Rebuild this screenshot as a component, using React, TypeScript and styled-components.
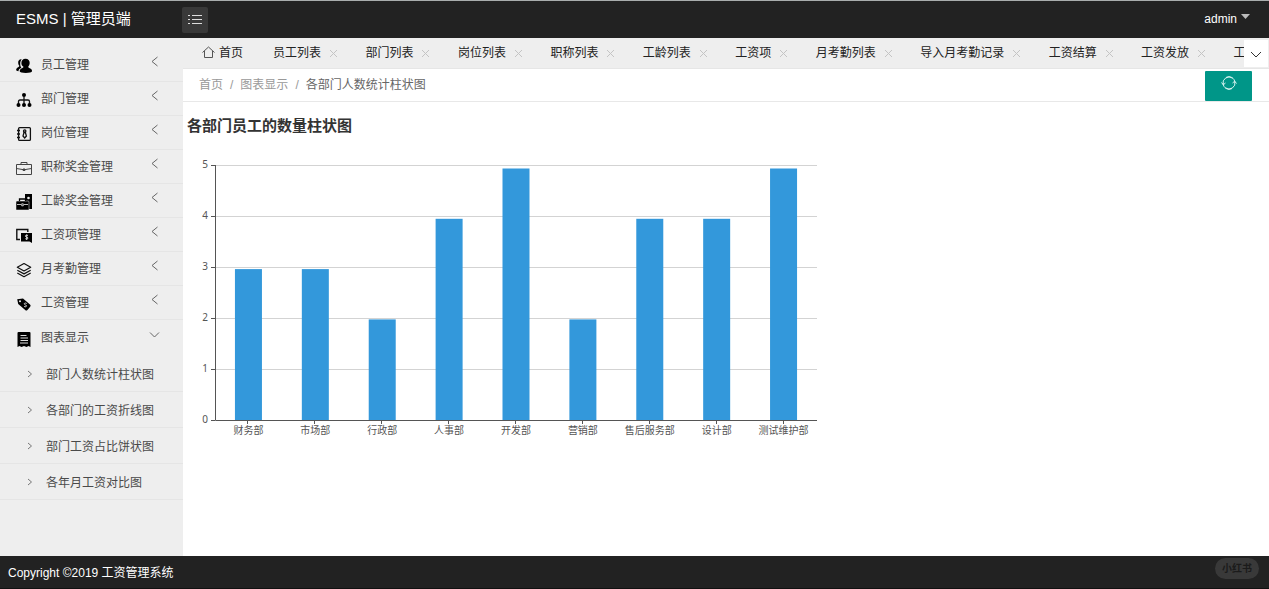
import React from "react";
import styled, { createGlobalStyle } from "styled-components";

const GlobalStyle = createGlobalStyle`
  * { box-sizing: border-box; }
  body {
    margin: 0;
    font-family: "Liberation Sans", "Noto Sans CJK SC", sans-serif;
    font-size: 12px;
    color: #333;
    background: #fff;
  }
  a { color: inherit; text-decoration: none; }
  button { font: inherit; color: inherit; border: 0; padding: 0; background: none; cursor: pointer; }
  ul, ol { list-style: none; margin: 0; padding: 0; }
  svg { display: block; flex: none; }
`;

const Page = styled.div`
  display: flex;
  flex-direction: column;
  min-height: 100vh;
`;

const Header = styled.header`
  display: flex;
  align-items: center;
  height: 38px;
  background: #222;
  border-top: 1px solid #a9adad;
  color: #fff;
`;

const Brand = styled.h1`
  width: 182px;
  margin: 0;
  padding: 0 0 2px 16px;
  font-size: 15px;
  line-height: 20px;
  font-weight: 400;
`;

const MenuToggle = styled.button`
  display: flex;
  align-items: center;
  justify-content: center;
  width: 26px;
  height: 26px;
  border-radius: 2px;
  background: #393939;
`;

const UserMenu = styled.button`
  display: flex;
  align-items: center;
  gap: 4px;
  margin-left: auto;
  margin-right: 18px;
  padding-bottom: 2px;
  line-height: 20px;

  svg { margin-bottom: 4px; }
`;

const Body = styled.div`
  display: flex;
  flex: 1;
`;

const Sidebar = styled.nav`
  width: 183px;
  flex: none;
  padding-top: 10px;
  background: #eee;
  color: #4a4a4a;
`;

const MenuLink = styled.a<{ $open?: boolean }>`
  display: flex;
  align-items: center;
  height: ${(p) => (p.$open ? 36 : 34)}px;
  padding: 0 22px 0 16px;
  border-bottom: 1px solid ${(p) => (p.$open ? "transparent" : "#e5e5e5")};

  span { flex: 1; margin-left: 9px; line-height: 18px; }
  > svg:last-child { margin-bottom: 5px; }
  > svg:first-child { margin-top: 2px; }
`;

const SubLink = styled.a`
  display: flex;
  align-items: center;
  gap: 12px;
  height: 36px;
  padding-left: 26px;
  border-bottom: 1px solid #e5e5e5;
`;

const Main = styled.main`
  display: flex;
  flex-direction: column;
  flex: 1;
  min-width: 0;
`;

const TabBar = styled.div`
  display: flex;
  align-items: center;
  height: 31px;
  background: #eee;
  border-bottom: 1px solid #e6e6e6;
`;

const TabViewport = styled.div`
  flex: 1;
  min-width: 0;
  overflow: hidden;
`;

const TabList = styled.ul`
  display: flex;
  width: calc(100% + 69px);
  padding-left: 19px;
`;

const Tab = styled.li`
  display: flex;
  align-items: center;
  flex: 1 0 auto;
  padding-right: 14px;
  margin-left: 13px;
  line-height: 30px;
  white-space: nowrap;
  color: #222;

  &:first-child { flex: none; margin-left: 0; padding-right: 17px; }
`;

const TabLink = styled.a`
  display: flex;
  align-items: center;
  gap: 4px;
`;

const TabClose = styled.button`
  display: flex;
  margin-left: 8px;
`;

const TabMore = styled.button`
  display: flex;
  align-items: center;
  justify-content: center;
  width: 24px;
  height: 27px;
  margin-right: 1px;
  padding-top: 4px;
  background: #fff;
`;

const CrumbBar = styled.div`
  display: flex;
  align-items: flex-end;
  justify-content: space-between;
  height: 33px;
  padding: 0 17px 0 16px;
  border-bottom: 1px solid #e8e8e8;
`;

const Crumbs = styled.ol`
  display: flex;
  line-height: 32px;
  color: #999;

  li + li::before { content: "/"; margin: 0 7px; }
  li:last-child a { color: #666; }
`;

const Refresh = styled.button`
  display: flex;
  align-items: center;
  justify-content: center;
  width: 47px;
  height: 30px;
  padding-bottom: 6px;
  border-radius: 1px;
  background: #009688;
`;

const Content = styled.section`
  padding: 14px 4px;
`;

const ChartTitle = styled.h2`
  margin: 0 0 24px;
  font-size: 15px;
  line-height: 20px;
  font-weight: 700;
`;

const Chart = styled.svg`
  font-family: "Noto Sans", "Noto Sans CJK SC", sans-serif;
  font-size: 10px;
  fill: #555;
`;

const Footer = styled.footer`
  display: flex;
  justify-content: space-between;
  height: 33px;
  padding: 2px 10px 0 8px;
  background: #222;
  border-bottom: 1px solid #111;
  color: #fff;
  line-height: 30px;
`;

const Watermark = styled.span`
  height: 21px;
  padding: 0 7px;
  border-radius: 11px;
  background: #393939;
  color: #1b1b1b;
  font-size: 10px;
  font-weight: 700;
  line-height: 21px;
`;

const Icon = ({ children }: { children: React.ReactNode }) => (
  <svg width="16" height="16" viewBox="0 0 16 16" fill="none" stroke="#111" aria-hidden="true">
    {children}
  </svg>
);

const Chevron = ({ d, w, h, color = "#666" }: { d: string; w: number; h: number; color?: string }) => (
  <svg width={w} height={h} fill="none" stroke={color} aria-hidden="true">
    <path d={d} />
  </svg>
);

const menu: { label: string; icon: React.ReactNode }[] = [
  {
    label: "员工管理",
    icon: (
      <g stroke="none" fill="#000">
        <path d="M9.5 .8c2.800 0 4.300 1.900 4.200 4.300-.1 1.700-.8 2.900-1.500 3.700 0 .8.6 1 1.600 1.500 1.500.7 2.300 1.500 2.200 3-.1 1.200-2.800 1.700-6.200 1.700s-6-.5-6.100-1.700c0-1.500.8-2.300 2.200-3 1-.5 1.600-.7 1.600-1.500C6 8 5.400 6.800 5.400 5.100 5.300 2.700 6.800 .8 9.500 .8z" />
        <path d="M5.700 1.300C3 1.100 2 3 2.200 5c.1 1.300.6 2.200 1.100 2.800 0 .8-.4 1-1.200 1.400C.9 9.900 0 10.800.2 12c.1.700.9 1 2.200 1.200.3-1.700 1.300-2.600 2.900-3.400-.8-1.300-1.200-2.700-1.100-4.500 0-1.400.6-2.900 1.500-4z" />
      </g>
    ),
  },
  {
    label: "部门管理",
    icon: (
      <g fill="#000">
        <circle cx="8" cy="3" r="2" stroke="none" />
        <path d="M8 4v8M2.500 12V9.500q0-1.500 1.500-1.500h8q1.500 0 1.500 1.500V12" fill="none" strokeWidth="1.300" />
        <g stroke="none">
          <circle cx="2.500" cy="13" r="2" />
          <circle cx="8" cy="13" r="2" />
          <circle cx="13.500" cy="13" r="2" />
        </g>
      </g>
    ),
  },
  {
    label: "岗位管理",
    icon: (
      <g strokeWidth="1.300">
        <rect x="2.600" y="1.600" width="11.800" height="12.800" rx="1" />
        <path d="M1 4.500h3M1 8h3M1 11.500h3" />
        <circle cx="8.700" cy="5" r="1.200" />
        <path d="M8 6.500 7 10l1.700 2 1.700-2-1-3.500z" />
      </g>
    ),
  },
  {
    label: "职称奖金管理",
    icon: (
      <g stroke="#444">
        <path d="M.5 4.500h15v10H.5zM5 4.500v-2h6v2M.5 8.500q7.500 2.500 15 0" />
        <path d="M7 9h2v1.500H7z" fill="#444" />
      </g>
    ),
  },
  {
    label: "工龄奖金管理",
    icon: (
      <g stroke="none">
        <path d="M9 0h7v15H9z" fill="#000" />
        <path d="M0 8q0-1 1-1h11q1 0 1 1v8H0z" fill="#000" stroke="#eee" strokeWidth=".5" />
        <path d="M3.500 7V5h6v2" fill="none" stroke="#000" strokeWidth="1.300" />
        <path d="M1 10.500h4M8 10.500h4M5.700 9.800h1.600v2H5.700z" stroke="#eee" strokeWidth=".8" />
        <circle cx="12.500" cy="4" r="1.300" fill="#eee" />
      </g>
    ),
  },
  {
    label: "工资项管理",
    icon: (
      <g>
        <path d="M4 11.500H.8v-10h11V4" strokeWidth="1.400" />
        <path d="M5 5h11v10l-2.500-1.500H5z" fill="#000" stroke="none" />
        <path d="M12 7.500c-2-.8-3 0-2.500 1s2.500.5 2.500 1.500-1.500 1.300-2.700.7M10.700 6.500v5.500" stroke="#eee" strokeWidth=".9" />
      </g>
    ),
  },
  {
    label: "月考勤管理",
    icon: (
      <g strokeWidth="1.200" strokeLinejoin="round">
        <path d="m8 1.500 6.700 3.700L8 9 1.300 5.200z" />
        <path d="m1.300 8.200 6.700 3.700 6.700-3.700M1.300 11 8 14.700l6.700-3.700" />
      </g>
    ),
  },
  {
    label: "工资管理",
    icon: (
      <g>
        <path d="M1.200 3.200 7 2.500l7 6q1.200 1 .2 2.200l-2.800 3.300q-1 1-2.200 0L2.200 8z" fill="#000" stroke="none" />
        <circle cx="4" cy="5.200" r="1" fill="#eee" stroke="none" />
        <path d="M10.700 7.500c-1.700-1-2.800-.2-2.200.8s2.200.7 2 1.700-1.500 1-2.500.3" stroke="#eee" strokeWidth=".9" />
      </g>
    ),
  },
  {
    label: "图表显示",
    icon: (
      <g stroke="none">
        <path d="M1.500 2q0-1 1-1h11q1 0 1 1v14l-2-1-2 1-2.500-1L5.500 16l-2-1-2 1z" fill="#000" />
        <path d="M4.500 4.500h6M4.500 7h7.500M4.500 9.500h7.500M4 12h8" stroke="#ddd" />
      </g>
    ),
  },
];

const subMenu = ["部门人数统计柱状图", "各部门的工资折线图", "部门工资占比饼状图", "各年月工资对比图"];

const tabs = [
  "员工列表", "部门列表", "岗位列表", "职称列表", "工龄列表", "工资项",
  "月考勤列表", "导入月考勤记录", "工资结算", "工资发放", "工资列表",
];

const data: [string, number][] = [
  ["财务部", 3], ["市场部", 3], ["行政部", 2], ["人事部", 4], ["开发部", 5],
  ["营销部", 2], ["售后服务部", 4], ["设计部", 4], ["测试维护部", 5],
];

const AXIS_X = 28;
const BASE_Y = 260;
const PLOT_W = 602;
const GRID_STEP = 51;
const BAR_STEP = 50.3;
const BAR_W = 27;

function BarChart() {
  const slot = PLOT_W / data.length;
  return (
    <Chart width="640" height="290" role="img" aria-label="各部门员工的数量柱状图">
      {[0, 1, 2, 3, 4, 5].map((n) => {
        const y = BASE_Y - n * GRID_STEP + 0.5;
        return (
          <g key={n}>
            {n > 0 && <path d={`M${AXIS_X} ${y}H${AXIS_X + PLOT_W}`} stroke="#d3d3d3" />}
            <path d={`M${AXIS_X - 4} ${y}H${AXIS_X}`} stroke="#555" />
            <text x={AXIS_X - 7} y={y + 2} textAnchor="end">{n}</text>
          </g>
        );
      })}
      {data.map(([name, value], i) => {
        const cx = AXIS_X + slot * (i + 0.5);
        const h = value * BAR_STEP;
        return (
          <g key={name}>
            <rect x={cx - BAR_W / 2} y={BASE_Y - h} width={BAR_W} height={h} fill="#3398db" />
            <path d={`M${Math.round(cx) - 0.5} ${BASE_Y}v4`} stroke="#555" />
            <text x={cx} y={BASE_Y + 14} textAnchor="middle">{name}</text>
          </g>
        );
      })}
      <path d={`M${AXIS_X + 0.5} 5V${BASE_Y + 0.5}H${AXIS_X + PLOT_W}`} fill="none" stroke="#555" />
    </Chart>
  );
}

export default function App() {
  return (
    <Page>
      <GlobalStyle />
      <Header>
        <Brand>ESMS | 管理员端</Brand>
        <MenuToggle aria-label="菜单">
          <svg width="14" height="12" stroke="#ddd" aria-hidden="true">
            <path d="M0 1.500h2M4 1.500h10M0 5.500h2M4 5.500h10M0 9.500h2M4 9.500h10" />
          </svg>
        </MenuToggle>
        <UserMenu>
          admin
          <svg width="10" height="5" aria-hidden="true">
            <path d="M0 0h9L4.500 5z" fill="#bbb" />
          </svg>
        </UserMenu>
      </Header>
      <Body>
        <Sidebar>
          <ul>
            {menu.map(({ label, icon }, i) => {
              const open = i === menu.length - 1;
              return (
                <li key={label}>
                  <MenuLink href="#" $open={open}>
                    <Icon>{icon}</Icon>
                    <span>{label}</span>
                    {open ? (
                      <Chevron w={12} h={8} d="M1 1.500 5.500 6 10 1.500" />
                    ) : (
                      <Chevron w={12} h={12} d="M8.500 1 3 5.500l5.500 4.500" />
                    )}
                  </MenuLink>
                  {open && (
                    <ul>
                      {subMenu.map((s) => (
                        <li key={s}>
                          <SubLink href="#">
                            <Chevron w={8} h={8} d="M2 1l3.500 3L2 7" color="#777" />
                            {s}
                          </SubLink>
                        </li>
                      ))}
                    </ul>
                  )}
                </li>
              );
            })}
          </ul>
        </Sidebar>
        <Main>
          <TabBar>
            <TabViewport>
              <TabList>
                <Tab>
                  <TabLink href="#">
                    <svg width="13" height="14" fill="none" stroke="#555" aria-hidden="true">
                      <path d="M.5 6.500 6.500 1l6 5.500M2.500 5v6.500h8V5" />
                    </svg>
                    首页
                  </TabLink>
                </Tab>
                {tabs.map((t) => (
                  <Tab key={t}>
                    <TabLink href="#">{t}</TabLink>
                    <TabClose aria-label={`关闭${t}`}>
                      <svg width="9" height="9" stroke="#c4c4c4" aria-hidden="true">
                        <path d="m1 1 7 7M8 1 1 8" />
                      </svg>
                    </TabClose>
                  </Tab>
                ))}
              </TabList>
            </TabViewport>
            <TabMore aria-label="更多标签">
              <Chevron w={12} h={8} d="m1 1 5 5 5-5" color="#333" />
            </TabMore>
          </TabBar>
          <CrumbBar>
            <Crumbs>
              <li><a href="#">首页</a></li>
              <li><a href="#">图表显示</a></li>
              <li><a href="#">各部门人数统计柱状图</a></li>
            </Crumbs>
            <Refresh aria-label="刷新">
              <svg width="16" height="16" fill="none" stroke="#d8f3f0" aria-hidden="true">
                <path d="M2.200 9.500A6 6 0 0 1 11.500 3.100M5 2.500A6 6 0 0 1 13.900 7.500" />
                <path d="M13.800 6.500A6 6 0 0 1 4.500 12.900M11 13.500A6 6 0 0 1 2.100 8.500" />
                <path d="M.5 7.500 2.300 9.800 4.500 8M11.500 8l2.200-1.800L15.500 8.500" />
              </svg>
            </Refresh>
          </CrumbBar>
          <Content>
            <ChartTitle>各部门员工的数量柱状图</ChartTitle>
            <BarChart />
          </Content>
        </Main>
      </Body>
      <Footer>
        <span>Copyright ©2019 工资管理系统</span>
        <Watermark>小红书</Watermark>
      </Footer>
    </Page>
  );
}
